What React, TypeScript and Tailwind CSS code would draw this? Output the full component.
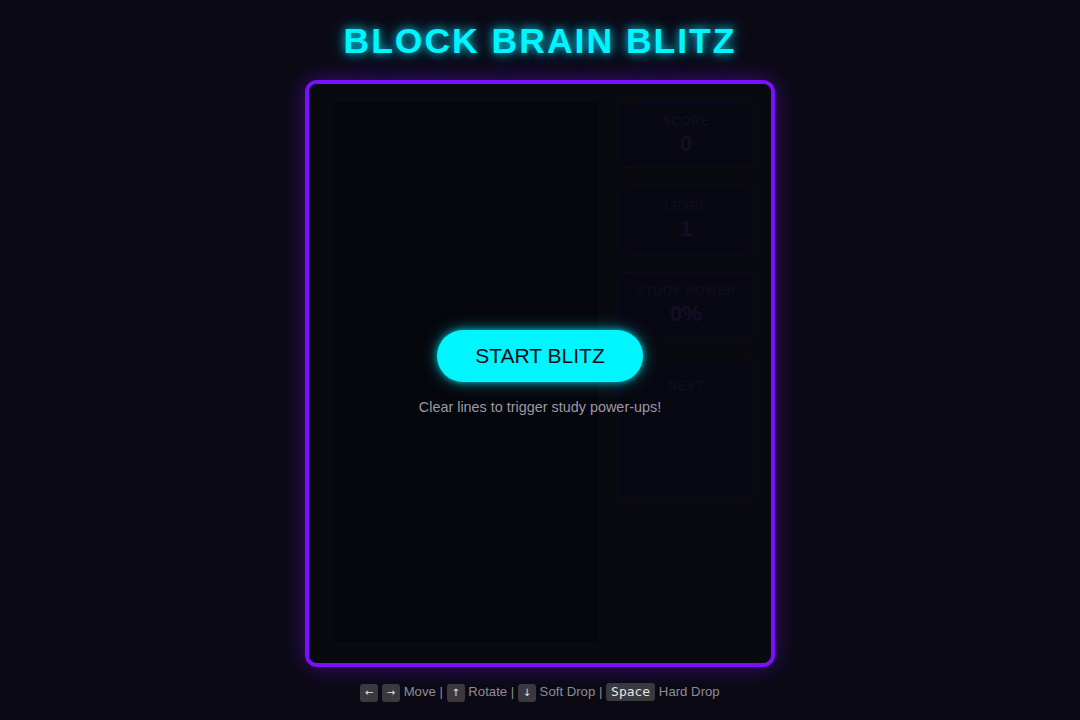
import React from "react";

function Kbd({ children, mono }: { children: React.ReactNode; mono?: boolean }) {
  return (
    <kbd
      className={
        mono
          ? "inline-block rounded-[3px] bg-[#3a3a3e] px-[5px] text-[13px] leading-[18px] text-[#e5e5e5] [font-family:'DejaVu_Sans_Mono',monospace]"
          : "inline-block w-[18px] rounded-[3px] bg-[#3a3a3e] text-center text-[10px] leading-[18px] text-[#e5e5e5] [font-family:'DejaVu_Sans',sans-serif]"
      }
    >
      {children}
    </kbd>
  );
}

function Panel({ label, value, tall }: { label: string; value?: string; tall?: boolean }) {
  return (
    <div
      className={
        "flex flex-col items-center rounded-[8px] border border-[#4a32a8] bg-[#242040] " +
        (tall ? "h-[141px] pt-[20px]" : "h-[66px] justify-center")
      }
    >
      <div className="text-[12px] leading-[16px] tracking-[1px] text-[#605888]">{label}</div>
      {value !== undefined && (
        <div className="mt-[2px] text-[22px] font-bold leading-[26px] text-[#6450d8]">{value}</div>
      )}
    </div>
  );
}

export default function App() {
  return (
    <div className="flex min-h-[720px] w-full flex-col items-center bg-[#0b0a14] [font-family:'Liberation_Sans',Arial,sans-serif]">
      <h1 className="mt-[21px] text-[35.5px] font-bold leading-[40px] tracking-[2px] text-[#00f5ff] [text-shadow:0_0_8px_rgba(0,245,255,0.8),0_0_18px_rgba(0,180,255,0.5)]">
        BLOCK BRAIN BLITZ
      </h1>
      <div className="relative mt-[19px] h-[587px] w-[470px] rounded-[12px] border-4 border-[#7a10ff] bg-[#262632] shadow-[0_0_22px_rgba(122,16,255,0.45)]">
        <div className="flex h-full pl-[24px] pt-[18px]">
          <div className="h-[540px] w-[265px] bg-[#12121e]" />
          <div className="ml-[20px] flex w-[136px] flex-col gap-[19px]">
            <Panel label="SCORE" value="0" />
            <Panel label="LEVEL" value="1" />
            <Panel label="STUDY POWER" value="0%" />
            <Panel label="NEXT" tall />
          </div>
        </div>
        <div className="absolute inset-0 flex flex-col items-center justify-center rounded-[8px] bg-[rgba(5,5,12,0.87)]">
          <button className="mt-[-2px] h-[52px] w-[206px] rounded-full bg-[#00f5ff] text-[21px] text-[#0a0a14] shadow-[0_0_16px_rgba(0,245,255,0.5),0_0_6px_rgba(0,245,255,0.6)]">
            START BLITZ
          </button>
          <p className="mt-[16px] text-[14.4px] leading-[18px] text-[#9a9aa6]">
            Clear lines to trigger study power-ups!
          </p>
        </div>
      </div>
      <div className="mt-[15px] text-[13.2px] leading-[20px] text-[#8c8c96]">
        <Kbd>←</Kbd> <Kbd>→</Kbd> Move | <Kbd>↑</Kbd> Rotate | <Kbd>↓</Kbd> Soft Drop |{" "}
        <Kbd mono>Space</Kbd> Hard Drop
      </div>
    </div>
  );
}
